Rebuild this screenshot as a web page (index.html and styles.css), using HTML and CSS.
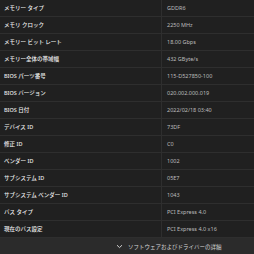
FILE: index.html
```html
<!DOCTYPE html>
<html lang="ja">
<head>
  <meta charset="UTF-8">
  <title>GPU 詳細</title>
  <link rel="stylesheet" href="styles.css">
</head>
<body>

  <!-- Spec table -->
  <div class="specs">
    <div class="row"><div class="label">メモリー タイプ</div><div class="value">GDDR6</div></div>
    <div class="row"><div class="label">メモリ クロック</div><div class="value">2250 MHz</div></div>
    <div class="row"><div class="label">メモリー ビット レート</div><div class="value">18.00 Gbps</div></div>
    <div class="row"><div class="label">メモリー全体の帯域幅</div><div class="value">432 GByte/s</div></div>
    <div class="row"><div class="label">BIOS パーツ番号</div><div class="value">115-D527850-100</div></div>
    <div class="row"><div class="label">BIOS バージョン</div><div class="value">020.002.000.019</div></div>
    <div class="row"><div class="label">BIOS 日付</div><div class="value">2022/02/18 03:40</div></div>
    <div class="row"><div class="label">デバイス ID</div><div class="value">73DF</div></div>
    <div class="row"><div class="label">修正 ID</div><div class="value">C0</div></div>
    <div class="row"><div class="label">ベンダー ID</div><div class="value">1002</div></div>
    <div class="row"><div class="label">サブシステム ID</div><div class="value">05E7</div></div>
    <div class="row"><div class="label">サブシステム ベンダー ID</div><div class="value">1043</div></div>
    <div class="row"><div class="label">バス タイプ</div><div class="value">PCI Express 4.0</div></div>
    <div class="row"><div class="label">現在のバス設定</div><div class="value">PCI Express 4.0 x16</div></div>
  </div>

  <!-- Expander -->
  <div class="more">
    <svg class="chevron" width="7" height="5" viewBox="0 0 7 5">
      <path d="M1 1.2 L3.5 3.6 L6 1.2" fill="none" stroke="#d0d0d0" stroke-width="1"/>
    </svg>
    <span>ソフトウェアおよびドライバーの詳細</span>
  </div>

</body>
</html>
```

FILE: styles.css
```css
body {
  margin: 0;
  background-color: #202020;
  font-family: "Noto Sans", "Noto Sans CJK JP", sans-serif;
  font-size: 5.5px;
  overflow: hidden;
}
.row {
  display: grid;
  grid-template-columns: 162px 1fr;
  height: 17px;
  border-bottom: 1px solid #2e2e2e;
  box-sizing: border-box;
}
.label {
  display: flex;
  align-items: center;
  padding-left: 4px;
  color: #ececec;
  font-weight: 500;
  border-right: 1px solid #2e2e2e;
}
.value {
  display: flex;
  align-items: center;
  padding-left: 5px;
  color: #bdbdbd;
}
.more {
  display: flex;
  align-items: center;
  gap: 5px;
  height: 17px;
  padding-left: 116px;
  background-color: #2b2b2b;
  color: #d6d6d6;
}
.chevron {
  display: block;
}
```
